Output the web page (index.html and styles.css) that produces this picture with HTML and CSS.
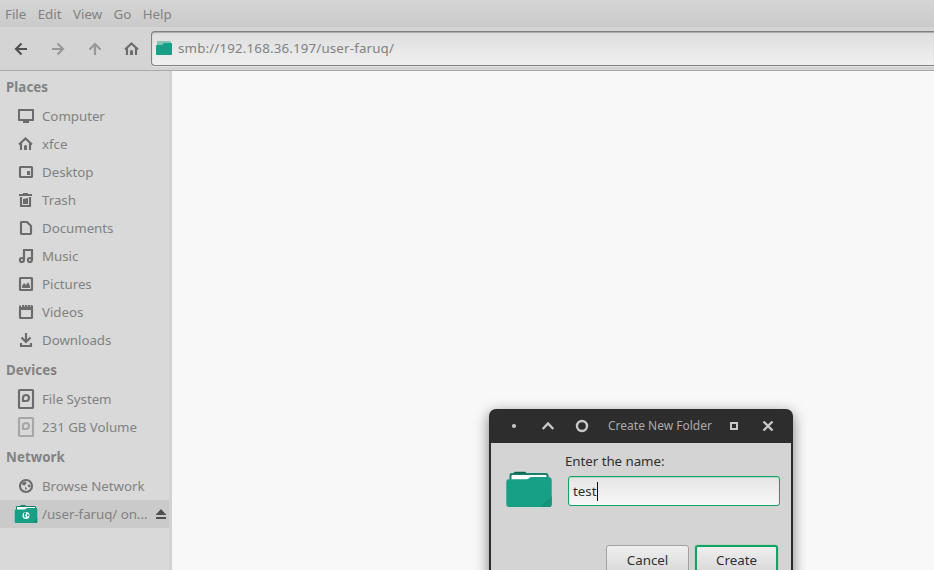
FILE: index.html
```html
<!DOCTYPE html>
<html lang="en">
<head>
<meta charset="utf-8">
<title>user-faruq - File Manager</title>
<link rel="stylesheet" href="styles.css">
</head>
<body>
<div class="window">
  <nav class="menubar"><span>File</span><span>Edit</span><span>View</span><span>Go</span><span>Help</span></nav>
  <header class="toolbar">
    <div class="nav-buttons">
      <svg class="dark" viewBox="0 0 37 28"><path d="M27 14H16.500M21.500 8.500L16 14L21.500 19.500"/></svg>
      <svg class="dim" viewBox="0 0 37 28"><path d="M15 14H25.500M20.500 8.500L26 14L20.500 19.500"/></svg>
      <svg class="dim" viewBox="0 0 37 28"><path d="M21 20V9.500M15.500 14.500L21 9L26.500 14.500"/></svg>
      <svg viewBox="0 0 37 28"><path d="M14 14.500L20.500 8.500L27 14.500M16 13V20M25 13V20"/><path class="fill" d="M19 20v-4l1-1h1l1 1v4z"/></svg>
    </div>
    <div class="location">
      <svg class="loc-folder" viewBox="0 0 16 14"><path fill="#80c5b5" d="M1 1q0-1 1-1h12q1 0 1 1v8H1z"/><path fill="#17a086" d="M0 5q0-1 1-1h5l2-2h7q1 0 1 1v10q0 1-1 1H1q-1 0-1-1z"/></svg>
      <span>smb://192.168.36.197/user-faruq/</span>
    </div>
  </header>
  <main class="content">
    <aside class="sidebar">
      <h2>Places</h2>
      <ul>
        <li><svg viewBox="0 0 24 28"><path class="fill" d="M4.500 7h15l.5.5v11l-.5.5h-15l-.5-.5v-11zM6 9v8h12V9z" fill-rule="evenodd"/><path class="fill" d="M9 19h6v2H9z"/></svg><span>Computer</span></li>
        <li><svg viewBox="0 0 24 28"><path d="M5 14.500L11.500 8.500L18 14.500M7 13V20M16 13V20"/><path class="fill" d="M10 20v-4l1-1h1l1 1v4z"/></svg><span>xfce</span></li>
        <li><svg viewBox="0 0 24 28"><rect x="6" y="9" width="12" height="10" rx=".5"/><path class="fill" d="M13 13h3v4h-3z"/></svg><span>Desktop</span></li>
        <li><svg viewBox="0 0 24 28"><path class="fill" d="M5 8h4V7h5v1h4v2H5z"/><path d="M7 11V20H16V11"/><path class="fill" d="M9 13l5-1v6H9z"/></svg><span>Trash</span></li>
        <li><svg viewBox="0 0 24 28"><path d="M7.500 8H13L17 12V19.500L16.500 20H7.500L7 19.500V8.500z"/></svg><span>Documents</span></li>
        <li><svg viewBox="0 0 24 28"><path d="M10 18V8H18V18"/><circle cx="7.900" cy="18" r="2"/><circle cx="15.900" cy="18" r="2"/></svg><span>Music</span></li>
        <li><svg viewBox="0 0 24 28"><rect x="6" y="8" width="12" height="12" rx=".5"/><path class="fill" d="M8 18v-2l2-3 2 2 2-3 2 4v2z"/></svg><span>Pictures</span></li>
        <li><svg viewBox="0 0 24 28"><rect x="6" y="10" width="12" height="10" rx=".5"/><path class="fill" d="M5 8l1-1 1 1v2h1V7h2l1 3V7h2l1 3V7h2l1 3V7h1l1 1v4H5z"/></svg><span>Videos</span></li>
        <li><svg viewBox="0 0 24 28"><path d="M12 7V15.500M7.500 11.500L12 16L16.500 11.500M7 17V20H17V17"/></svg><span>Downloads</span></li>
      </ul>
      <h2>Devices</h2>
      <ul>
        <li><svg viewBox="0 0 24 28"><rect x="5" y="5" width="14" height="18" rx=".8"/><path d="M9 17V13Q9 10 12 10Q15 10 15 13Q15 16 12 16H9"/></svg><span>File System</span></li>
        <li><svg class="faded" viewBox="0 0 24 28"><rect x="5" y="5" width="14" height="18" rx=".8"/><path d="M9 17V13Q9 10 12 10Q15 10 15 13Q15 16 12 16H9"/></svg><span>231 GB Volume</span></li>
      </ul>
      <h2>Network</h2>
      <ul>
        <li><svg viewBox="0 0 24 28"><circle cx="12" cy="14" r="6"/><path class="fill" d="M8 11l2.500-1.500 2 .5-.5 2-1.500 1.500-2-.5zM13.500 13l2.500-.5.500 2-1 1-1.500-1zM11 15l2 1-1 2-1-1z"/></svg><span>Browse Network</span></li>
        <li class="selected"><svg viewBox="0 0 24 28"><path fill="#17816c" d="M2 7q0-1 1-1h3l1-1h4l1 1h9q1 0 1 1v5H2z"/><path fill="#fff" d="M3 7h18V10H3z"/><path fill="#17a086" d="M.7 10.500q0-1 1-1H11l2-1.500h9.300q1 0 1 1v13q0 1-1 1H1.700q-1 0-1-1z"/><path fill="#15937b" d="M23.300 18v4q0 1-1 1h-4z"/><circle cx="12" cy="15.500" r="3.500" fill="#e8fffa"/><path fill="#17a086" d="M10 13l2-1v2l-1 1 1 2-1 1-1-2zM13 14l2 1-1 2-1-1z"/></svg><span>/user-faruq/ on...</span><svg class="eject" viewBox="0 0 12 28"><path d="M6 9l5 5.500v.5H1v-.5zM1 17h10v2H1z"/></svg></li>
      </ul>
    </aside>
    <section class="files"></section>
  </main>
</div>
<section class="dialog" role="dialog">
  <header class="titlebar">
    <svg viewBox="0 0 34 34"><circle class="dot" cx="17" cy="17" r="2.100"/></svg>
    <svg viewBox="0 0 34 34"><path d="M11.700 20L17 14.500L22.300 20"/></svg>
    <svg viewBox="0 0 34 34"><circle cx="17" cy="17" r="5"/></svg>
    <span>Create New Folder</span>
    <svg viewBox="0 0 34 34"><path class="square" d="M14 14H20V20H14z"/></svg>
    <svg viewBox="0 0 34 34"><path d="M12.500 12.500L21.500 21.500M21.500 12.500L12.500 21.500"/></svg>
  </header>
  <div class="dialog-body">
    <div class="form">
      <svg class="folder" viewBox="0 0 46 36"><path fill="#17816c" d="M3.500 4q0-2 2-2h2l1-1h11l1 1h19.500q2 0 2.500 2v5h-39z"/><path fill="#0f6454" d="M8 1.500l1-.7h10l1 .7-1 1H9z"/><path fill="#fff" d="M5.500 5q0-1 1-1h33q1 0 1 1v5h-35z"/><path fill="#17a086" d="M.3 10.500q0-2.200 2.500-2.300H21q1 0 2-1t2-1.200h17.500q3 .3 3.200 3v24q0 3-2.500 3H2.800q-2.500 0-2.500-3z"/><path fill="#15937b" d="M45.700 25v8q0 3-2.500 3H34z"/></svg>
      <div class="field"><label>Enter the name:</label><div class="entry">test<i class="caret"></i></div></div>
    </div>
    <div class="actions"><button>Cancel</button><button class="default">Create</button></div>
  </div>
</section>
</body>
</html>
```
FILE: styles.css
```css
* { box-sizing: border-box; }
body {
  margin: 0; height: 570px; overflow: hidden; position: relative;
  font: 13.333px/18px "Noto Sans", sans-serif; color: #828282; background: #d4d4d4;
}
svg { display: block; flex: none; fill: none; stroke: #6c6c6c; stroke-width: 2.15; }
svg .fill { fill: #6c6c6c; stroke: none; }
svg [fill] { stroke: none; }
.window { height: 570px; display: flex; flex-direction: column; }
.menubar {
  height: 27px; display: flex; gap: 11.4px; padding: 5px 5px 0;
  background: linear-gradient(#d5d5d5, #cacaca);
}
.toolbar { height: 44px; display: flex; padding-top: 4px; border-bottom: 1px solid #aaa; }
.nav-buttons { display: flex; width: 151px; padding-top: 4px; }
.nav-buttons svg { width: 37px; height: 28px; }
.nav-buttons .dark { stroke: #505050; }
.nav-buttons .dim { stroke: #989898; }
.location {
  flex: 1; height: 35px; display: flex; align-items: center; gap: 6px;
  padding: 0 0 1px 4px; border: 1px solid #828282; border-right: 0;
  border-radius: 4px 0 0 4px; background: linear-gradient(#dedede, #f0f0f0);
  box-shadow: inset 0 1px 1px #aaa, 0 1px #e4e4e4; letter-spacing: .16px;
}
.loc-folder { width: 16px; height: 14px; stroke: none; }
.content { flex: 1; display: flex; min-height: 0; }
.sidebar { width: 172px; background: #d9d9d9; border-right: 3px solid #d2d2d2; }
.files { flex: 1; background: #f8f8f8; }
h2 { margin: 0; height: 31px; padding: 7px 6px 0; font-size: 13.333px; line-height: 18px; letter-spacing: .05px; }
ul { margin: 0; padding: 0; list-style: none; letter-spacing: -.05px; }
li { height: 28px; display: flex; align-items: center; gap: 4px; padding-left: 14px; white-space: nowrap; }
li > svg { width: 24px; height: 28px; }
.faded { opacity: .45; }
.selected { background: #cacaca; }
.selected .eject { width: 12px; margin-left: auto; margin-right: 2px; fill: #505050; stroke: none; }
.dialog {
  position: absolute; left: 489px; top: 409px; width: 304px; height: 180px;
  background: #2d2d2d; border-radius: 7px 7px 0 0; padding: 0 2px; color: #303030;
  box-shadow: 0 4px 14px rgba(0,0,0,.5);
}
.titlebar { height: 34px; display: flex; align-items: center; padding-left: 6px; font-size: 12px; color: #aaa; }
.titlebar svg { width: 34px; height: 34px; stroke: #c8c8c8; stroke-width: 2.4; }
.titlebar .square { stroke-width: 2; }
.titlebar span { width: 118px; padding-left: 9px; white-space: nowrap; }
.titlebar .dot { fill: #c8c8c8; stroke: none; }
.dialog-body { height: 146px; background: #d4d4d4; padding: 9px 11px 0 15px; }
.form { display: flex; gap: 13px; }
.folder { width: 46px; height: 36px; margin-top: 19px; stroke: none; }
.field { flex: 1; }
label { display: block; height: 24px; letter-spacing: -.05px; }
.entry {
  height: 30px; display: flex; align-items: center; margin-left: 3px; padding-left: 4px;
  border: 1px solid #10a564; border-radius: 3px;
  background: linear-gradient(#e5e5e5, #f7f7f7); box-shadow: inset 0 1px 1px #b5d4c5;
}
.caret { width: 1px; height: 19px; background: #111; }
.actions { display: flex; justify-content: flex-end; gap: 6px; margin-top: 38px; padding-right: 2px; }
button {
  width: 83px; height: 30px; font: inherit; color: #303030; padding: 0;
  border: 1px solid #a2a2a2; border-radius: 3px; background: linear-gradient(#efefef, #d8d8d8);
}
button.default { border: 2px solid #10a564; box-shadow: 0 0 1px #10a564; }
```
